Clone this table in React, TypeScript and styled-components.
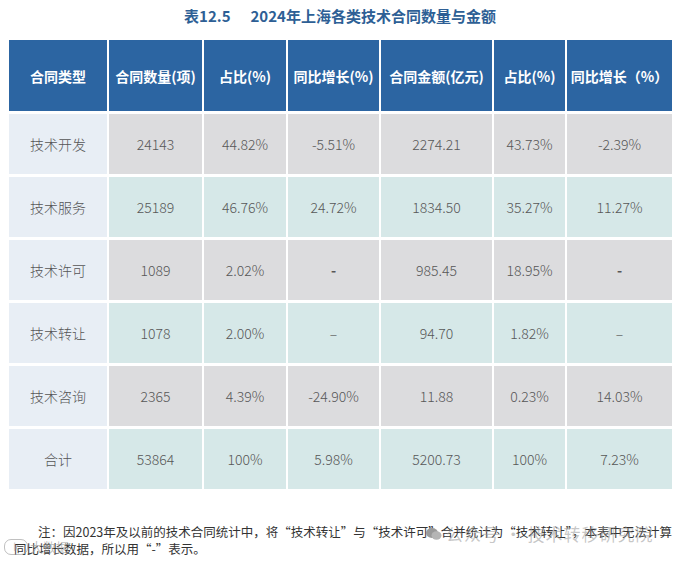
import styled, { createGlobalStyle } from 'styled-components';

const GlobalStyle = createGlobalStyle`
  html, body {
    margin: 0;
    padding: 0;
    background: #ffffff;
  }
  body {
    font-family: "Noto Sans CJK SC", "Noto Sans", sans-serif;
  }
`;

type Tone = 'gray' | 'teal';

interface Row {
  name: string;
  tone: Tone;
  cells: string[];
  dash?: 'bold' | 'light';
}

const headers = [
  '合同类型',
  '合同数量(项)',
  '占比(%)',
  '同比增长(%)',
  '合同金额(亿元)',
  '占比(%)',
  '同比增长（%）',
];

const rows: Row[] = [
  { name: '技术开发', tone: 'gray', cells: ['24143', '44.82%', '-5.51%', '2274.21', '43.73%', '-2.39%'] },
  { name: '技术服务', tone: 'teal', cells: ['25189', '46.76%', '24.72%', '1834.50', '35.27%', '11.27%'] },
  { name: '技术许可', tone: 'gray', cells: ['1089', '2.02%', '-', '985.45', '18.95%', '-'], dash: 'bold' },
  { name: '技术转让', tone: 'teal', cells: ['1078', '2.00%', '–', '94.70', '1.82%', '–'], dash: 'light' },
  { name: '技术咨询', tone: 'gray', cells: ['2365', '4.39%', '-24.90%', '11.88', '0.23%', '14.03%'] },
  { name: '合计', tone: 'teal', cells: ['53864', '100%', '5.98%', '5200.73', '100%', '7.23%'] },
];

function App() {
  return (
    <Page>
      <GlobalStyle />
      <Title>
        表12.5<TitleSpace />2024年上海各类技术合同数量与金额
      </Title>
      <Table>
        {headers.map((h, i) => (
          <HeadCell key={i}>{h}</HeadCell>
        ))}
        {rows.map((row) => (
          <>
            <NameCell key={row.name}>{row.name}</NameCell>
            {row.cells.map((c, i) => (
              <DataCell key={row.name + i} $tone={row.tone} $boldDash={row.dash === 'bold' && c === '-'}>
                {c}
              </DataCell>
            ))}
          </>
        ))}
      </Table>
      <Note>
        <NoteText>
          注：因2023年及以前的技术合同统计中，将“技术转让”与“技术许可”合并统计为“技术转让”，本表中无法计算
          <br />
          同比增长数据，所以用“-”表示。
        </NoteText>
        <WechatMark>
          <svg width="16" height="14" viewBox="0 0 16 14">
            <ellipse cx="6" cy="6" rx="6" ry="5" fill="#9a9a9a" />
            <ellipse cx="10.5" cy="8.5" rx="5" ry="4.2" fill="#b5b5b5" />
          </svg>
          <span>公众号 · 技术转移研究院</span>
        </WechatMark>
        <LogoMark>
          <LogoBadge>k</LogoBadge>
          <span>大数据</span>
        </LogoMark>
      </Note>
    </Page>
  );
}

const Page = styled.div`
  width: 680px;
  height: 561px;
  overflow: hidden;
  background: #ffffff;
`;

const Title = styled.h1`
  margin: 0;
  padding-top: 5px;
  height: 35px;
  box-sizing: border-box;
  text-align: center;
  font-size: 15px;
  line-height: 22px;
  font-weight: 700;
  color: #2e5f95;
  letter-spacing: 0;
`;

const TitleSpace = styled.span`
  display: inline-block;
  width: 20px;
`;

const Table = styled.div`
  display: grid;
  grid-template-columns: 98px 93px 82px 91px 111px 71px 105px;
  grid-template-rows: 71px repeat(6, 60px);
  column-gap: 2px;
  row-gap: 3px;
  margin-top: 5px;
  margin-left: 9px;
  width: max-content;
`;

const Cell = styled.div`
  display: flex;
  align-items: center;
  justify-content: center;
  font-size: 14px;
  white-space: nowrap;
`;

const HeadCell = styled(Cell)`
  background: #2c65a2;
  color: #ffffff;
  font-weight: 700;
`;

const NameCell = styled(Cell)`
  background: #e8eef5;
  color: #555555;
  font-weight: 300;
`;

const DataCell = styled(Cell)<{ $tone: Tone; $boldDash?: boolean }>`
  background: ${(p) => (p.$tone === 'gray' ? '#dcdcde' : '#d6e8e8')};
  color: #575757;
  font-weight: ${(p) => (p.$boldDash ? 700 : 300)};
`;

const Note = styled.div`
  position: relative;
  margin-top: 34px;
  padding-left: 14px;
`;

const NoteText = styled.p`
  margin: 0;
  font-size: 12.5px;
  line-height: 17px;
  color: #333333;
  text-indent: 24px;
  white-space: nowrap;
`;

const WechatMark = styled.div`
  position: absolute;
  left: 426px;
  top: -2px;
  display: flex;
  align-items: center;
  gap: 4px;
  font-size: 17px;
  color: rgba(150, 150, 150, 0.55);
  white-space: nowrap;
  letter-spacing: 1px;
  pointer-events: none;
`;

const LogoMark = styled.div`
  position: absolute;
  left: 4px;
  top: 14px;
  display: flex;
  align-items: center;
  gap: 2px;
  font-size: 13px;
  color: rgba(150, 150, 150, 0.6);
  pointer-events: none;
`;

const LogoBadge = styled.span`
  display: inline-flex;
  align-items: center;
  justify-content: center;
  width: 22px;
  height: 14px;
  border: 1px solid rgba(150, 150, 150, 0.6);
  border-radius: 7px;
  font-size: 10px;
`;

export default App;
